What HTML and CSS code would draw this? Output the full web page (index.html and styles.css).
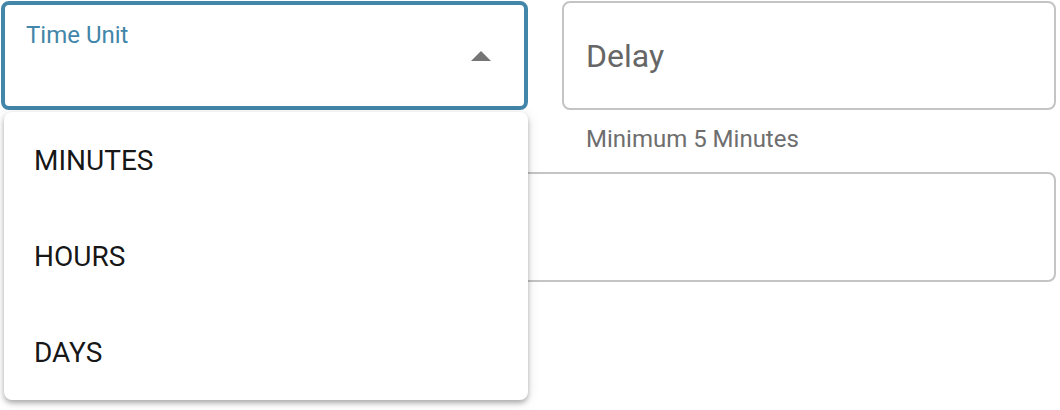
FILE: index.html
```html
<!DOCTYPE html>
<html lang="en">
<head>
<meta charset="utf-8">
<title>Time Unit</title>
<link rel="stylesheet" href="styles.css">
</head>
<body>
<div class="page">
  <div class="top-row">
    <div class="select-box">
      <span class="select-label">Time Unit</span>
      <svg class="arrow" width="20" height="10" viewBox="0 0 20 10" aria-hidden="true"><path d="M0 10 L10 0 L20 10 Z" fill="#757575"/></svg>
    </div>
    <div class="field">
      <div class="input-box">
        <span class="input-label">Delay</span>
      </div>
      <div class="helper">Minimum 5 Minutes</div>
    </div>
  </div>
  <div class="wide-box"></div>

  <ul class="menu">
    <li class="menu-item">MINUTES</li>
    <li class="menu-item">HOURS</li>
    <li class="menu-item">DAYS</li>
  </ul>
</div>
</body>
</html>
```

FILE: styles.css
```css
* { box-sizing: border-box; }

html, body {
  margin: 0;
  padding: 0;
  background: #ffffff;
}

body {
  font-family: Roboto, "Liberation Sans", Arial, sans-serif;
  width: 1060px;
  height: 410px;
  overflow: hidden;
}

.page {
  position: relative;
  padding: 1px 4px 0 1px;
}

.top-row {
  display: flex;
  gap: 34px;
  align-items: flex-start;
}

.select-box {
  width: 527px;
  height: 109px;
  border: 4px solid #4286a9;
  border-radius: 8px;
  display: flex;
  justify-content: space-between;
  align-items: center;
  padding: 0 33px 0 21px;
}

.select-label {
  align-self: flex-start;
  margin-top: 16px;
  font-size: 24px;
  line-height: 28px;
  color: #4286a9;
}

.arrow {
  display: block;
}

.field {
  width: 494px;
}

.input-box {
  height: 109px;
  border: 2px solid #c4c4c4;
  border-radius: 8px;
  display: flex;
  align-items: center;
  padding-left: 22px;
}

.input-label {
  font-size: 32px;
  line-height: 38px;
  color: #666666;
}

.helper {
  margin-top: 15px;
  padding-left: 24px;
  font-size: 24px;
  line-height: 28px;
  color: #6e6e6e;
}

.wide-box {
  margin-top: 19px;
  margin-left: 40px;
  height: 110px;
  border: 2px solid #c4c4c4;
  border-radius: 8px;
}

.menu {
  position: absolute;
  left: 4px;
  top: 112px;
  width: 524px;
  height: 288px;
  margin: 0;
  padding: 0;
  list-style: none;
  background: #ffffff;
  border-radius: 8px;
  box-shadow: 0 3px 5px rgba(0, 0, 0, 0.28), 0 2px 14px rgba(0, 0, 0, 0.10);
}

.menu-item {
  height: 96px;
  display: flex;
  align-items: center;
  padding-left: 30px;
  font-size: 28px;
  color: rgba(0, 0, 0, 0.92);
}
```
